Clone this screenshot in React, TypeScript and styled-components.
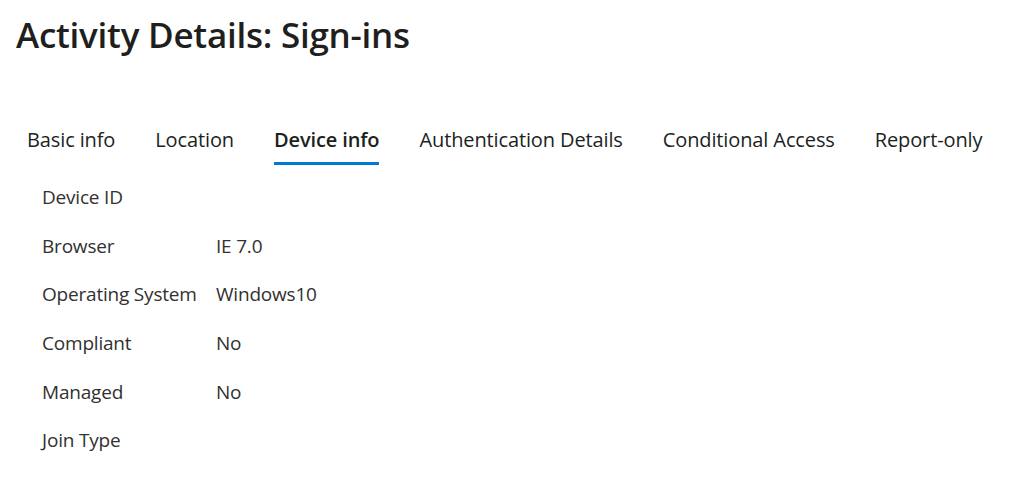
import React from 'react';
import styled, { createGlobalStyle } from 'styled-components';

const GlobalStyle = createGlobalStyle`
  body {
    margin: 0;
    background: #fff;
    font-family: 'Open Sans', 'Noto Sans', sans-serif;
    color: #201f1e;
  }
`;

type Detail = {
  label: string;
  value?: string;
};

const tabs = [
  'Basic info',
  'Location',
  'Device info',
  'Authentication Details',
  'Conditional Access',
  'Report-only',
];

const details: Detail[] = [
  { label: 'Device ID' },
  { label: 'Browser', value: 'IE 7.0' },
  { label: 'Operating System', value: 'Windows10' },
  { label: 'Compliant', value: 'No' },
  { label: 'Managed', value: 'No' },
  { label: 'Join Type' },
];

const App: React.FC = () => {
  return (
    <Page>
      <GlobalStyle />
      <Title>Activity Details: Sign-ins</Title>
      <TabBar>
        {tabs.map((tab) => (
          <Tab key={tab} active={tab === 'Device info'}>
            {tab}
          </Tab>
        ))}
      </TabBar>
      <DetailList>
        {details.map((d) => (
          <Row key={d.label}>
            <Label>{d.label}</Label>
            <Value>{d.value}</Value>
          </Row>
        ))}
      </DetailList>
    </Page>
  );
};

export default App;

const Page = styled.div`
  width: 1024px;
  height: 504px;
  padding: 11px 16px 0;
  box-sizing: border-box;
`;

const Title = styled.h1`
  margin: 0;
  font-size: 35px;
  font-weight: 600;
  line-height: 48px;
  letter-spacing: -0.25px;
`;

const TabBar = styled.div`
  display: flex;
  gap: 40px;
  margin-top: 67px;
  padding-left: 11px;
`;

const Tab = styled.div<{ active?: boolean }>`
  font-size: 20px;
  line-height: 28px;
  padding-bottom: 8px;
  letter-spacing: -0.12px;
  font-weight: ${(props) => (props.active ? 600 : 400)};
  border-bottom: 3px solid
    ${(props) => (props.active ? '#0078d4' : 'transparent')};
`;

const DetailList = styled.div`
  padding: 8px 0 0 26px;
`;

const Row = styled.div`
  display: grid;
  grid-template-columns: 174px 1fr;
  height: 48.6px;
  align-items: center;
  font-size: 19px;
  letter-spacing: -0.2px;
`;

const Label = styled.div`
  color: #323130;
`;

const Value = styled.div`
  color: #323130;
`;
